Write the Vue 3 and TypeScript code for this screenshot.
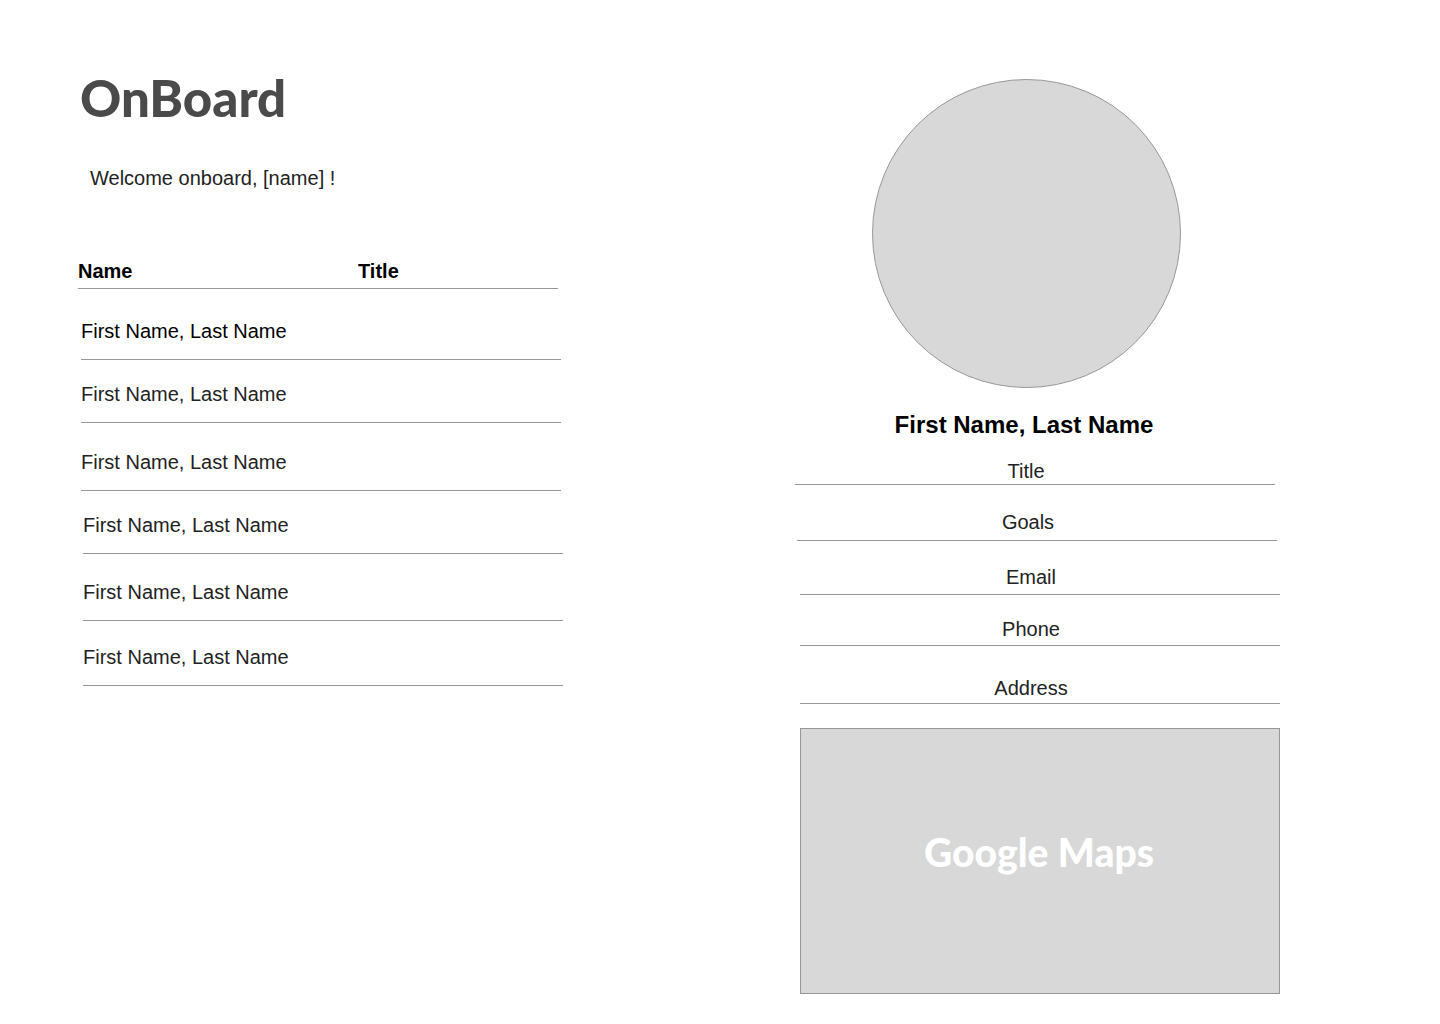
<script setup lang="ts">
interface Person {
  id: number
  name: string
  title: string
}

const placeholder = 'First Name, Last Name'

const makePeople = (start: number): Person[] =>
  [0, 1, 2].map((i) => ({ id: start + i, name: placeholder, title: '' }))

const groups: Person[][] = [makePeople(1), makePeople(4)]
const fields: string[] = ['Title', 'Goals', 'Email', 'Phone', 'Address']
</script>

<template>
  <div class="page">
    <main class="directory">
      <h1 class="brand">OnBoard</h1>
      <p class="welcome">Welcome onboard, [name] !</p>

      <table class="people">
        <thead>
          <tr>
            <th scope="col">Name</th>
            <th scope="col">Title</th>
          </tr>
        </thead>
        <tbody v-for="(group, g) in groups" :key="g">
          <tr v-for="person in group" :key="person.id">
            <td>{{ person.name }}</td>
            <td>{{ person.title }}</td>
          </tr>
        </tbody>
      </table>
    </main>

    <aside class="profile">
      <div class="avatar"></div>
      <h2 class="full-name">{{ placeholder }}</h2>
      <ul class="fields">
        <li v-for="field in fields" :key="field">{{ field }}</li>
      </ul>
      <section class="map"><h3>Google Maps</h3></section>
    </aside>
  </div>
</template>

<style>
body {
  margin: 0;
  background: #fff;
}
</style>

<style scoped>
.page {
  display: grid;
  grid-template-columns: 1fr 1fr;
  color: #222;
  font-family: "Helvetica Neue", "Liberation Sans", Arial, sans-serif;
  font-size: 20px;
  font-weight: 300;
  line-height: 24px;
}

.directory {
  padding: 69px 72px 0 78px;
}

.brand {
  margin: 0 2px;
  color: #4a4a4a;
  font-family: Avenir, Lato, sans-serif;
  font-size: 51px;
  font-weight: 900;
  line-height: 58px;
}

.welcome {
  margin: 39px 12px 0;
}

.people {
  display: block;
  margin-top: 69px;
  max-width: 485px;
}

.people thead,
.people tbody {
  display: block;
  max-width: 480px;
}

.people tbody {
  margin-left: 3px;
}

.people tbody + tbody {
  margin-left: 5px;
}

.people tr {
  display: grid;
  grid-template-columns: 280px 1fr;
  border-bottom: 1px solid #979797;
}

.people th {
  padding: 0 0 5px;
  color: #000;
  font-weight: 700;
  text-align: left;
}

.people td {
  padding: 22px 0 16px;
}

.people tbody:nth-child(2) tr:first-child td {
  padding-top: 30px;
  color: #000;
}

.people tbody:nth-child(2) tr:last-child td {
  padding-top: 27px;
}

.people tbody:nth-child(3) tr:nth-child(2) td {
  padding-top: 26px;
}

.people tbody:nth-child(3) tr:last-child td {
  padding-top: 24px;
}

.profile {
  max-width: 485px;
  padding: 79px 72px 30px 75px;
}

.avatar {
  box-sizing: border-box;
  width: 309px;
  height: 309px;
  margin-left: 77px;
  border: 1px solid #979797;
  border-radius: 50%;
  background: #d8d8d8;
}

.full-name {
  margin: 22px 27px 0 0;
  color: #000;
  font-size: 24px;
  font-weight: 700;
  line-height: 30px;
  text-align: center;
}

.fields {
  margin: 19px 0 0;
  padding: 0;
  list-style: none;
}

.fields li {
  max-width: 462px;
  margin-left: 5px;
  padding: 24px 18px 5px 0;
  border-bottom: 1px solid #979797;
  text-align: center;
}

.fields li:first-child {
  margin-left: 0;
  padding-top: 0;
  padding-bottom: 1px;
}

.fields li:nth-child(2) {
  margin-left: 2px;
  padding-top: 25px;
  padding-bottom: 6px;
}

.fields li:nth-child(4) {
  padding-top: 22px;
  padding-bottom: 4px;
}

.fields li:last-child {
  padding-top: 30px;
  padding-bottom: 3px;
}

.map {
  display: flex;
  justify-content: center;
  box-sizing: border-box;
  height: 266px;
  max-width: 480px;
  margin: 24px 0 0 5px;
  border: 1px solid #979797;
  background: #d8d8d8;
}

.map h3 {
  margin: 101px 2px 0 0;
  color: #fff;
  font-family: Avenir, Lato, sans-serif;
  font-size: 39px;
  font-weight: 900;
  line-height: 44px;
}
</style>
